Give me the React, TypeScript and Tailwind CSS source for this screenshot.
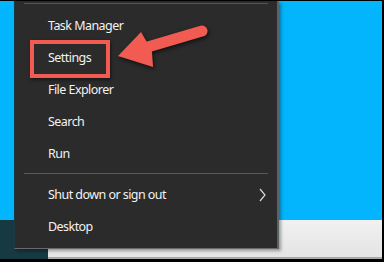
const items = ["Task Manager", "Settings", "File Explorer", "Search", "Run"];

function MenuItem({ label, sub }: { label: string; sub?: boolean }) {
  return (
    <div className="flex h-[32px] items-center justify-between pl-[33px] pr-[11px] text-[12.5px] tracking-[-0.55px] text-[#f2f2f2]">
      <span>{label}</span>
      {sub && (
        <svg width="7" height="14" viewBox="0 0 7 14" className="text-[#d8d8d8]">
          <polyline points="1,1 6,7 1,13" fill="none" stroke="currentColor" strokeWidth="1.2" />
        </svg>
      )}
    </div>
  );
}

export default function App() {
  return (
    <div
      className="relative flex h-[262px] w-[384px] flex-col overflow-hidden bg-black pt-px pr-[2px] pb-[3px]"
      style={{ fontFamily: '"Noto Sans", "Open Sans", sans-serif' }}
    >
      {/* desktop */}
      <div className="flex-1 bg-[#02b5fd]" />

      {/* taskbar */}
      <div className="flex h-[39px]">
        <div className="w-[48px] bg-[#173942]" />
        <div className="flex-1 border-b-2 border-[#a9a9a9] bg-gradient-to-b from-[#f1f1f1] to-[#e4e4e4]" />
      </div>

      {/* context menu */}
      <div className="absolute left-[14px] top-px flex h-[248px] w-[265px] flex-col border-l border-r-2 border-b border-l-[#1d3a42] border-r-[#596265] border-b-[#6a6a6a] bg-[#2b2b2b] pt-[2px] shadow-[2px_2px_3px_rgba(0,0,0,0.35)]">
        <div className="mx-[9px] h-px bg-[#555]" />
        <div className="mt-[6px]">
          {items.map((label) => (
            <MenuItem key={label} label={label} />
          ))}
        </div>
        <div className="mx-[9px] mt-[3px] mb-[4px] h-px bg-[#5a5a5a]" />
        <div className="mt-px">
          <MenuItem label="Shut down or sign out" sub />
          <MenuItem label="Desktop" />
        </div>
      </div>

      {/* highlight box */}
      <div className="absolute left-[30px] top-[40px] h-[38px] w-[80px] border-[4px] border-[#f25b52] shadow-[1px_2px_3px_rgba(0,0,0,0.5)]" />

      {/* arrow */}
      <svg
        className="pointer-events-none absolute left-0 top-0 drop-shadow-[1px_2px_2px_rgba(0,0,0,0.6)]"
        width="384"
        height="262"
        viewBox="0 0 384 262"
      >
        <line x1="202" y1="31" x2="146" y2="47.5" stroke="#f25b52" strokeWidth="11" strokeLinecap="round" />
        <polygon points="118,56 141,32 148,44 152,52 153,67" fill="#f25b52" />
      </svg>
    </div>
  );
}
